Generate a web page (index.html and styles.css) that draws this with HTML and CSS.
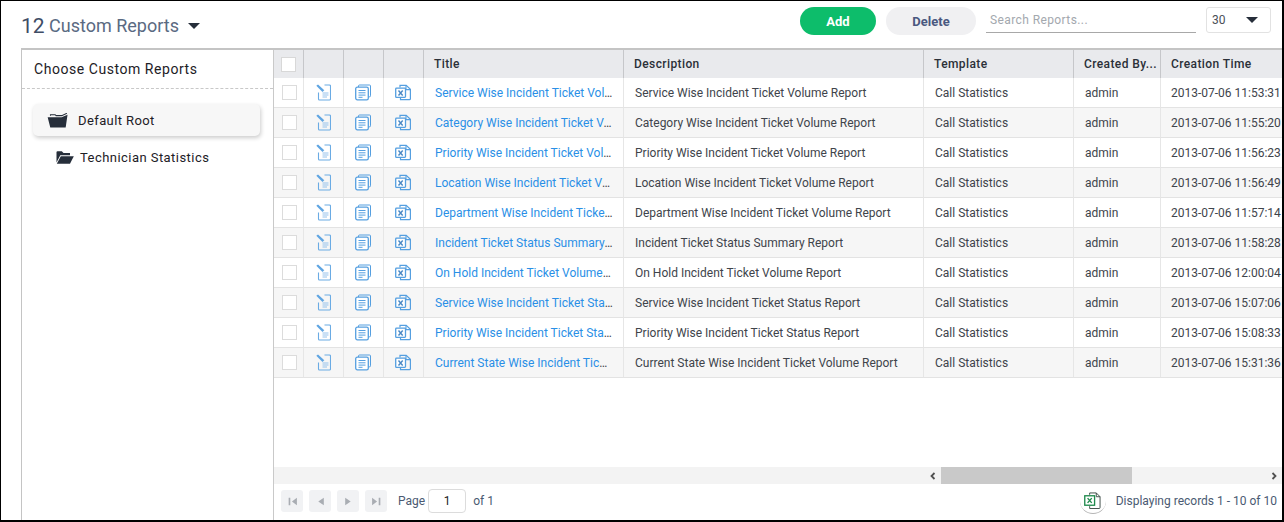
FILE: index.html
```html
<!DOCTYPE html>
<html lang="en">
<head>
<meta charset="utf-8">
<title>Custom Reports</title>
<link rel="stylesheet" href="styles.css">
</head>
<body>
<svg class="defs" width="0" height="0" aria-hidden="true">
  <symbol id="i-edit" viewBox="-.5 0 16 17">
    <path d="M9 1h5a1 1 0 0 1 1 1v13a1 1 0 0 1-1 1H4a1 1 0 0 1-1-1V8.500" fill="none" stroke="#6aabe4" stroke-width="1.100"/>
    <path d="M.8 1.800L2.500.5 8.800 6.300 7 8z" fill="#5fa5e2"/>
    <path d="M7 9h6M7 11h6M7 13h4.500" stroke="#95c2ec" stroke-width="1"/>
  </symbol>
  <symbol id="i-copy" viewBox="0 0 16 16">
    <path d="M3.500 2.500V1.500a1 1 0 0 1 1-1h10a1 1 0 0 1 1 1v9.800a1 1 0 0 1-1 1h-1" fill="none" stroke="#559fe0" stroke-width="1"/>
    <rect x=".7" y="2.700" width="12.600" height="12.600" rx="1.600" fill="#fff" stroke="#559fe0" stroke-width="1.300"/>
    <path d="M3.500 6h7M3.500 8.300h7M3.500 10.600h7M3.500 12.800h4" stroke="#559fe0" stroke-width="1"/>
  </symbol>
  <symbol id="i-xls" viewBox="0 0 16 16">
    <path d="M5 3V.8h6.200l4.200 4v9.400a1 1 0 0 1-1 1H5.500V13" fill="none" stroke="#559fe0" stroke-width="1.200"/>
    <path d="M11 .8v4.300h4.400" fill="none" stroke="#559fe0" stroke-width="1.100"/>
    <rect x=".7" y="3.700" width="9.800" height="9.200" rx=".8" fill="#fff" stroke="#559fe0" stroke-width="1.300"/>
    <path d="M3.500 6l4.200 5M7.700 6l-4.200 5" stroke="#4a88c4" stroke-width="1.400"/>
  </symbol>
</svg>

<div class="frame">
  <header class="topbar">
    <h1 class="heading"><span class="count">12</span> Custom Reports <span class="caret caret-lg"></span></h1>
    <div class="actions">
      <button class="btn btn-add" type="button">Add</button>
      <button class="btn btn-del" type="button">Delete</button>
      <div class="search">Search Reports...</div>
      <div class="select"><span>30</span><span class="caret"></span></div>
    </div>
  </header>

  <main class="panel">
    <aside class="side">
      <div class="side-title">Choose Custom Reports</div>
      <div class="tree">
        <div class="node node-root">
          <svg class="folder-open" viewBox="0 0 22 16"><path d="M.5 4.500H15.300L21.700 1.800 19.700 15.500H3.300z" fill="#262e3a"/><path d="M3.500 3V1.800H8.500L9.500 2.800H15.500L21 .3" fill="none" stroke="#262e3a" stroke-width="1.100"/></svg>
          <span>Default Root</span>
        </div>
        <div class="node node-child">
          <svg class="folder-small" viewBox="0 0 18 13"><path d="M.5 11.500V1.200a1 1 0 0 1 1-1h4.300L7.500 2H14v2.200H4.300z" fill="#262e3a"/><path d="M4.800 5.200H17.800L14 12.800H.8z" fill="#262e3a"/></svg>
          <span>Technician Statistics</span>
        </div>
      </div>
    </aside>

    <section class="content">
      <div class="table-wrap">
        <table class="grid">
          <colgroup>
            <col class="c-check"><col class="c-icon"><col class="c-icon"><col class="c-icon">
            <col class="c-title"><col class="c-desc"><col class="c-tpl"><col class="c-by"><col class="c-time">
          </colgroup>
          <thead>
            <tr>
              <th class="center head-check"><span class="box box-head"></span></th>
              <th></th><th></th><th></th>
              <th>Title</th><th>Description</th><th>Template</th><th class="th-by">Created By...</th><th>Creation Time</th>
            </tr>
          </thead>
          <tbody>
            <tr><td class="center"><span class="box"></span></td><td class="center"><svg class="ico"><use href="#i-edit"/></svg></td><td class="center"><svg class="ico"><use href="#i-copy"/></svg></td><td class="center"><svg class="ico"><use href="#i-xls"/></svg></td><td class="td-title"><a class="link">Service Wise Incident Ticket Volume Report</a></td><td>Service Wise Incident Ticket Volume Report</td><td>Call Statistics</td><td>admin</td><td>2013-07-06 11:53:31</td></tr>
            <tr><td class="center"><span class="box"></span></td><td class="center"><svg class="ico"><use href="#i-edit"/></svg></td><td class="center"><svg class="ico"><use href="#i-copy"/></svg></td><td class="center"><svg class="ico"><use href="#i-xls"/></svg></td><td class="td-title"><a class="link">Category Wise Incident Ticket Volume Report</a></td><td>Category Wise Incident Ticket Volume Report</td><td>Call Statistics</td><td>admin</td><td>2013-07-06 11:55:20</td></tr>
            <tr><td class="center"><span class="box"></span></td><td class="center"><svg class="ico"><use href="#i-edit"/></svg></td><td class="center"><svg class="ico"><use href="#i-copy"/></svg></td><td class="center"><svg class="ico"><use href="#i-xls"/></svg></td><td class="td-title"><a class="link">Priority Wise Incident Ticket Volume Report</a></td><td>Priority Wise Incident Ticket Volume Report</td><td>Call Statistics</td><td>admin</td><td>2013-07-06 11:56:23</td></tr>
            <tr><td class="center"><span class="box"></span></td><td class="center"><svg class="ico"><use href="#i-edit"/></svg></td><td class="center"><svg class="ico"><use href="#i-copy"/></svg></td><td class="center"><svg class="ico"><use href="#i-xls"/></svg></td><td class="td-title"><a class="link">Location Wise Incident Ticket Volume Report</a></td><td>Location Wise Incident Ticket Volume Report</td><td>Call Statistics</td><td>admin</td><td>2013-07-06 11:56:49</td></tr>
            <tr><td class="center"><span class="box"></span></td><td class="center"><svg class="ico"><use href="#i-edit"/></svg></td><td class="center"><svg class="ico"><use href="#i-copy"/></svg></td><td class="center"><svg class="ico"><use href="#i-xls"/></svg></td><td class="td-title"><a class="link">Department Wise Incident Ticket Volume Report</a></td><td>Department Wise Incident Ticket Volume Report</td><td>Call Statistics</td><td>admin</td><td>2013-07-06 11:57:14</td></tr>
            <tr><td class="center"><span class="box"></span></td><td class="center"><svg class="ico"><use href="#i-edit"/></svg></td><td class="center"><svg class="ico"><use href="#i-copy"/></svg></td><td class="center"><svg class="ico"><use href="#i-xls"/></svg></td><td class="td-title"><a class="link">Incident Ticket Status Summary Report</a></td><td>Incident Ticket Status Summary Report</td><td>Call Statistics</td><td>admin</td><td>2013-07-06 11:58:28</td></tr>
            <tr><td class="center"><span class="box"></span></td><td class="center"><svg class="ico"><use href="#i-edit"/></svg></td><td class="center"><svg class="ico"><use href="#i-copy"/></svg></td><td class="center"><svg class="ico"><use href="#i-xls"/></svg></td><td class="td-title"><a class="link">On Hold Incident Ticket Volume Report</a></td><td>On Hold Incident Ticket Volume Report</td><td>Call Statistics</td><td>admin</td><td>2013-07-06 12:00:04</td></tr>
            <tr><td class="center"><span class="box"></span></td><td class="center"><svg class="ico"><use href="#i-edit"/></svg></td><td class="center"><svg class="ico"><use href="#i-copy"/></svg></td><td class="center"><svg class="ico"><use href="#i-xls"/></svg></td><td class="td-title"><a class="link">Service Wise Incident Ticket Status Report</a></td><td>Service Wise Incident Ticket Status Report</td><td>Call Statistics</td><td>admin</td><td>2013-07-06 15:07:06</td></tr>
            <tr><td class="center"><span class="box"></span></td><td class="center"><svg class="ico"><use href="#i-edit"/></svg></td><td class="center"><svg class="ico"><use href="#i-copy"/></svg></td><td class="center"><svg class="ico"><use href="#i-xls"/></svg></td><td class="td-title"><a class="link">Priority Wise Incident Ticket Status Report</a></td><td>Priority Wise Incident Ticket Status Report</td><td>Call Statistics</td><td>admin</td><td>2013-07-06 15:08:33</td></tr>
            <tr><td class="center"><span class="box"></span></td><td class="center"><svg class="ico"><use href="#i-edit"/></svg></td><td class="center"><svg class="ico"><use href="#i-copy"/></svg></td><td class="center"><svg class="ico"><use href="#i-xls"/></svg></td><td class="td-title"><a class="link">Current State Wise Incident Ticket Volume Report</a></td><td>Current State Wise Incident Ticket Volume Report</td><td>Call Statistics</td><td>admin</td><td>2013-07-06 15:31:36</td></tr>
          </tbody>
        </table>
      </div>

      <div class="hscroll">
        <div class="hscroll-gap"></div>
        <div class="arrow"><svg viewBox="0 0 8 8"><path d="M5.500 1L2.500 4l3 3" fill="none" stroke="#505050" stroke-width="1.800"/></svg></div>
        <div class="thumb"></div>
        <div class="track"></div>
        <div class="arrow"><svg viewBox="0 0 8 8"><path d="M2.500 1l3 3-3 3" fill="none" stroke="#505050" stroke-width="1.800"/></svg></div>
      </div>

      <footer class="pager">
        <div class="pager-left">
          <span class="pg"><svg viewBox="0 0 10 10"><path d="M1.500 1.500h1.500v7H1.500zM9 1.500v7L4.500 5z" fill="#a9adb3"/></svg></span>
          <span class="pg"><svg viewBox="0 0 10 10"><path d="M8 1.500v7L3 5z" fill="#a9adb3"/></svg></span>
          <span class="pg"><svg viewBox="0 0 10 10"><path d="M2 1.500v7L7 5z" fill="#a9adb3"/></svg></span>
          <span class="pg"><svg viewBox="0 0 10 10"><path d="M1 1.500v7L5.500 5zM7 1.500h1.500v7H7z" fill="#a9adb3"/></svg></span>
          <span class="pg-label pg-page">Page</span>
          <span class="pg-input">1</span>
          <span class="pg-label">of 1</span>
        </div>
        <div class="pager-right">
          <span class="xls-badge"><svg viewBox="0 0 18 18"><path d="M6 3V1h7l4 4v11.500a1 1 0 0 1-1 1H6V15" fill="#fff" stroke="#3c4a44" stroke-width="1"/><path d="M13 1v4h4" fill="none" stroke="#3c4a44" stroke-width="1"/><rect x=".8" y="4" width="10.400" height="10" fill="#fff" stroke="#1f8a4c" stroke-width="1.400"/><path d="M3.800 6.500l4.400 5M8.200 6.500l-4.400 5" stroke="#1f8a4c" stroke-width="1.500"/></svg></span>
          <span class="pg-label">Displaying records 1 - 10 of 10</span>
        </div>
      </footer>
    </section>
  </main>
</div>
</body>
</html>
```

FILE: styles.css
```css
* { box-sizing: border-box; }
html, body { margin: 0; height: 100%; }
body { font-family: Roboto, "Liberation Sans", sans-serif; background: #fff; overflow: hidden; }
.defs { position: absolute; }

.frame {
  width: 1284px;
  height: 522px;
  border: solid #000;
  border-width: 1px 2px 2px 1px;
  padding: 0 0 0 20px;
  display: flex;
  flex-direction: column;
}

.topbar {
  height: 47px;
  flex: none;
  display: flex;
  align-items: flex-start;
  justify-content: space-between;
}
.heading {
  margin: 12px 0 0;
  font-size: 18px;
  line-height: 26px;
  font-weight: 400;
  color: #5a6a82;
  display: flex;
  align-items: center;
  white-space: pre;
}
.count { font-size: 21px; color: #3f4d66; }
.caret {
  display: inline-block;
  width: 0;
  height: 0;
  border-left: 6px solid transparent;
  border-right: 6px solid transparent;
  border-top: 6px solid #262e3a;
}
.caret-lg { margin-left: 5px; }

.actions { display: flex; align-items: flex-start; padding-top: 6px; padding-right: 11px; }
.btn {
  height: 28px;
  border: 0;
  border-radius: 14px;
  font: 700 13px Roboto, sans-serif;
  padding: 0;
}
.btn-add { width: 76px; background: #0dbd6b; color: #fff; }
.btn-del { width: 90px; margin-left: 10px; background: #f0f0f2; color: #4a5880; }
.search {
  width: 210px;
  height: 26px;
  margin-left: 10px;
  padding: 3px 5px 0 4px;
  border-bottom: 1px solid #a8a8a8;
  font-size: 12px;
  line-height: 20px;
  letter-spacing: .4px;
  color: #a3a8ae;
}
.select {
  width: 65px;
  height: 26px;
  margin-left: 10px;
  padding: 0 12px 0 5px;
  border: 1px solid #e2e2e2;
  border-radius: 3px;
  font-size: 12px;
  color: #4a4f57;
  display: flex;
  align-items: center;
  justify-content: space-between;
}

.panel {
  flex: 1;
  min-height: 0;
  display: flex;
  border: solid #c4c4c4;
  border-width: 2px 0 0 1px;
}
.side { width: 252px; flex: none; border-right: 1px solid #c9c9c9; }
.side-title {
  height: 39px;
  padding: 0 12px;
  border-bottom: 1px dashed #c8c8c8;
  font-size: 14px;
  line-height: 38px;
  letter-spacing: .55px;
  color: #1d2026;
}
.tree { padding: 15px 12px 0 11px; }
.node { display: flex; align-items: center; font-size: 13px; letter-spacing: .4px; color: #1d2026; }
.node-root {
  width: 227px;
  height: 32px;
  padding-left: 14px;
  gap: 10px;
  background: #f7f7f7;
  border-radius: 5px;
  box-shadow: 1px 2px 4px rgba(0,0,0,.2);
}
.folder-open { width: 21px; height: 15px; }
.node-child { height: 30px; margin-top: 6px; padding-left: 23px; gap: 6px; letter-spacing: .45px; }
.folder-small { width: 18px; height: 13px; }

.content { flex: 1; min-width: 0; display: flex; flex-direction: column; }
.table-wrap { flex: 1; min-height: 0; overflow: hidden; }
.grid { table-layout: fixed; border-collapse: separate; border-spacing: 0; width: 1017px; font-size: 12px; }
.c-check { width: 30px; }
.c-icon { width: 40px; }
.c-title { width: 200px; }
.c-desc { width: 300px; }
.c-tpl { width: 150px; }
.c-by { width: 87px; }
.c-time { width: 130px; }
.grid th {
  height: 28px;
  padding: 0 10px;
  background: #e9eaed;
  border-right: 1px solid #c6c7ca;
  font-weight: 500;
  font-size: 12px;
  letter-spacing: .4px;
  color: #2b3038;
  text-align: left;
  white-space: nowrap;
  overflow: hidden;
  text-overflow: ellipsis;
}
.grid th.th-by { padding-right: 3px; }
.grid th:last-child, .grid td:last-child { border-right: 0; }
.grid td {
  height: 30px;
  padding: 0 11px;
  border-right: 1px solid #e6e6e6;
  border-bottom: 1px solid #e3e3e3;
  color: #40444b;
  white-space: nowrap;
  overflow: hidden;
  text-overflow: ellipsis;
}
.grid td.td-title { padding-right: 10px; }
.grid th.center, .grid td.center { padding: 0 1px 0 0; text-align: center; }
.grid tbody tr:nth-child(even) td { background: #f6f6f6; }
.grid td:last-child { padding: 0 0 0 10px; }
.link { color: #2a8fe6; }
.box {
  display: block;
  width: 15px;
  height: 15px;
  margin-left: 8px;
  background: #fff;
  border: 1px solid #dcdcdc;
}
.box-head { margin-left: 7px; border-color: #d8d8d8; }
.ico { display: block; width: 16px; height: 17px; margin: 0 auto; }

.hscroll { height: 17px; flex: none; display: flex; align-items: stretch; background: #f3f3f3; }
.hscroll-gap { width: 650px; flex: none; }
.arrow { width: 17px; flex: none; display: flex; align-items: center; justify-content: center; }
.arrow svg { width: 8px; height: 8px; }
.thumb { width: 191px; flex: none; background: #c9c9c9; }
.track { flex: 1; }

.pager { height: 36px; flex: none; display: flex; align-items: center; justify-content: space-between; padding: 0 5px 2px 7px; }
.pager-left, .pager-right { display: flex; align-items: center; }
.pg {
  width: 22px;
  height: 22px;
  margin-right: 6px;
  background: #f1f2f4;
  border-radius: 3px;
  display: flex;
  align-items: center;
  justify-content: center;
}
.pg svg { width: 11px; height: 11px; }
.pg-label { font-size: 12px; color: #4a5a72; }
.pg-page { margin-left: 5px; }
.pg-input {
  width: 38px;
  height: 24px;
  margin: 0 7px 0 3px;
  border: 1px solid #dcdcdc;
  border-radius: 4px;
  font-size: 12px;
  line-height: 22px;
  text-align: center;
  color: #222;
}
.xls-badge {
  width: 26px;
  height: 26px;
  margin-right: 10px;
  border-radius: 50%;
  border-bottom: 1px solid #b5b5b5;
  display: flex;
  align-items: center;
  justify-content: center;
}
.xls-badge svg { width: 17px; height: 17px; }
```
